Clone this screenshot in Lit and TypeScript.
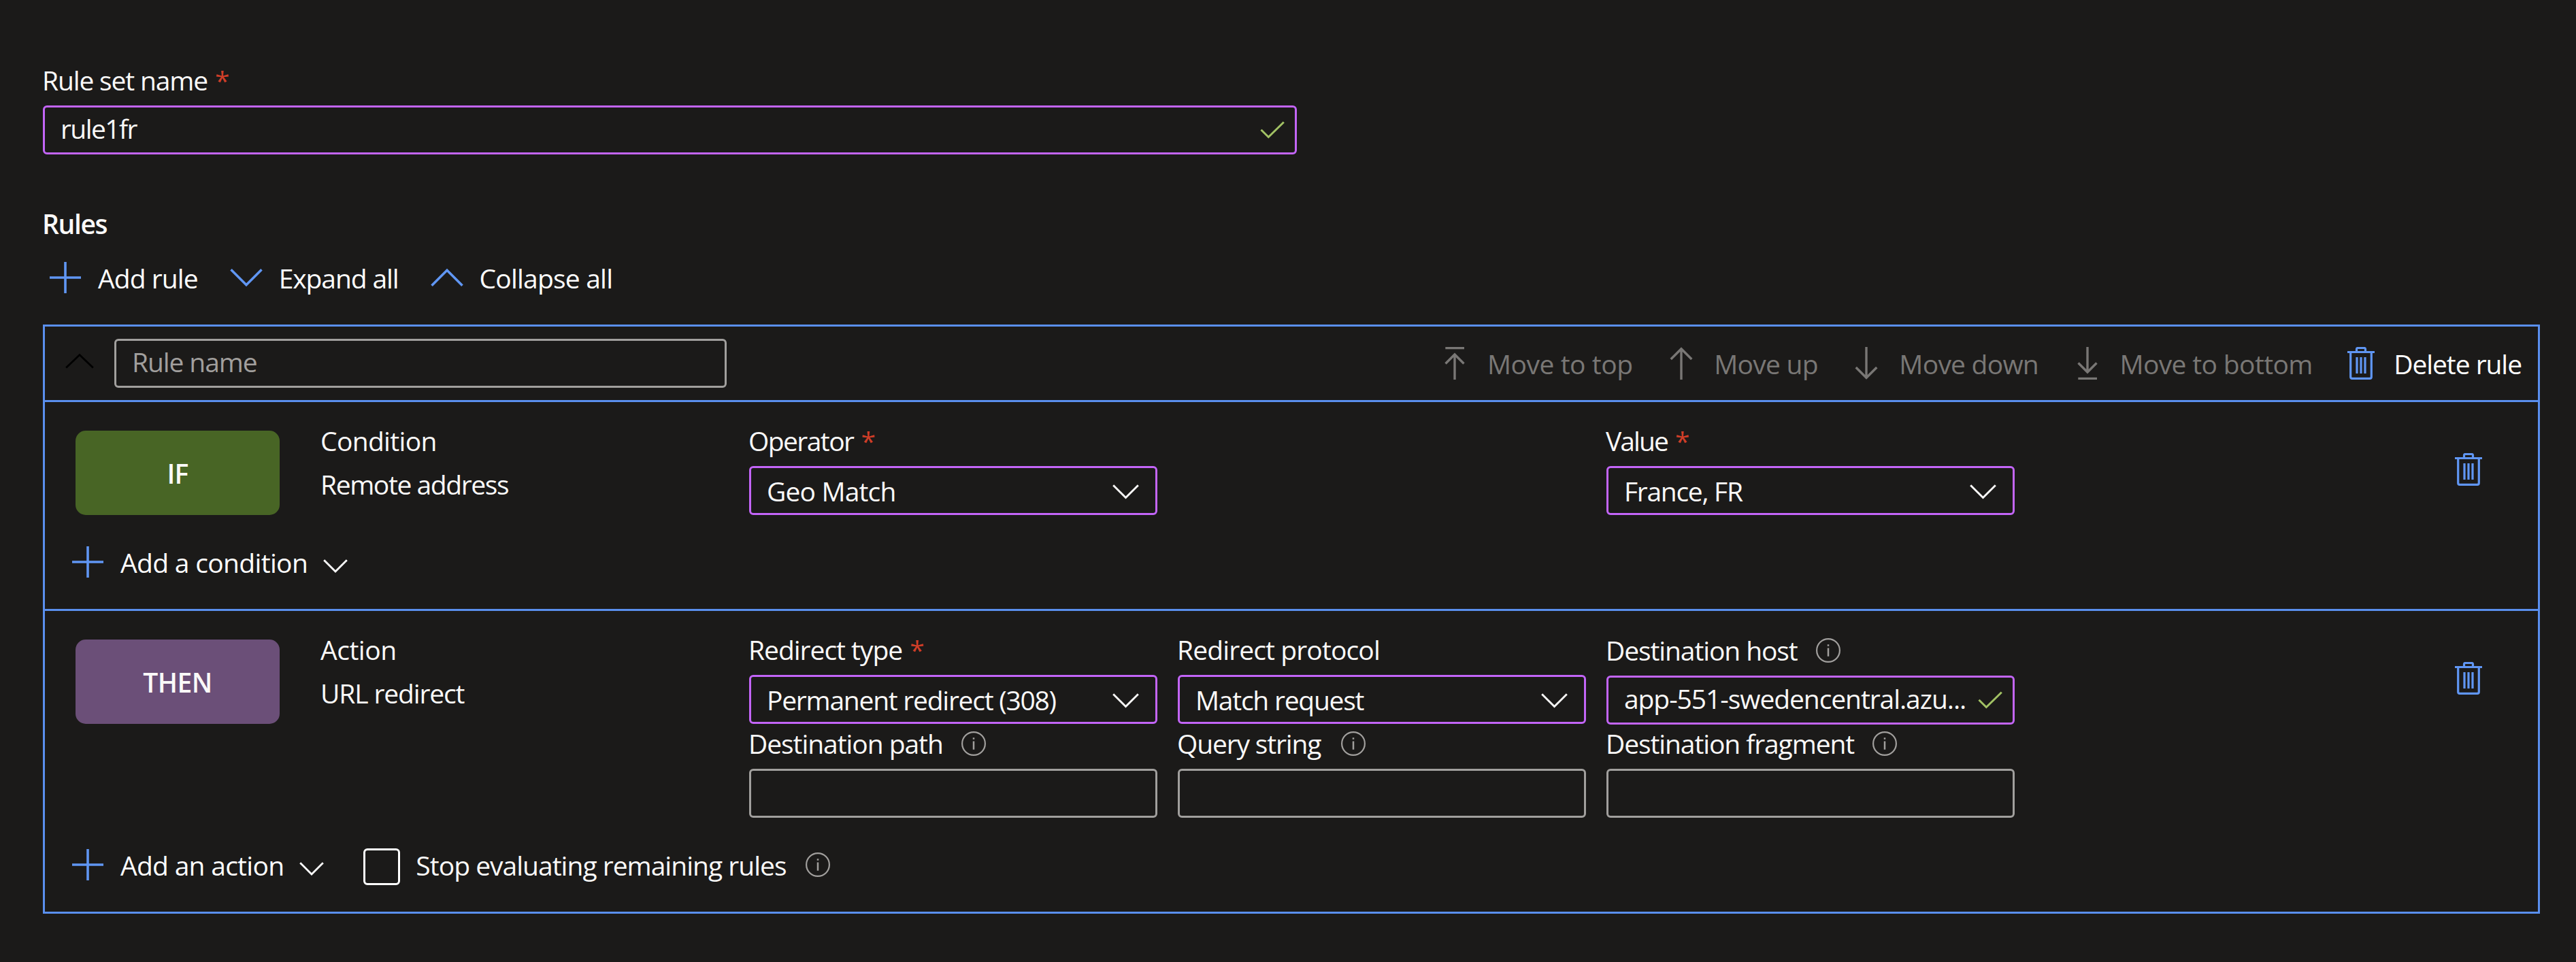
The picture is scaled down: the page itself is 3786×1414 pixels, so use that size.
import { LitElement, html, svg, css, nothing } from "lit";
import { customElement } from "lit/decorators.js";
import { styleMap } from "lit/directives/style-map.js";

// Tracking, in pixels, for each label at the 39px interface size.
const TRACKING: Record<string, number> = {
  "Rule set name": -1.15, "rule1fr": -1.59, "Rules": -1.38, "Add rule": -0.93,
  "Expand all": -1.1, "Collapse all": -0.8, "Rule name": -1.1, "Condition": -0.68,
  "Remote address": -1.41, "IF": -0.9, "Add a condition": -0.67, "Move to top": -0.46,
  "Move up": -0.73, "Move down": -0.76, "Move to bottom": -0.65, "Delete rule": -1.06,
  "Operator": -1.58, "Geo Match": -0.85, "Value": -1.92, "France, FR": -1.3,
  "Action": -0.47, "URL redirect": -1.13, "THEN": -0.57, "Add an action": -0.72,
  "Stop evaluating remaining rules": -0.99, "Redirect type": -1.02, "Redirect protocol": -0.88,
  "Permanent redirect (308)": -1.25, "Match request": -1.24, "Destination path": -1.06,
  "Query string": -1.15, "Destination host": -1.1, "Destination fragment": -1.1,
  "app-551-swedencentral.azu...": -1.08,
};

const text = (value: string, cls = "") =>
  html`<span class="text ${cls}" style=${styleMap({ letterSpacing: `${TRACKING[value] ?? -1}px` })}>${value}</span>`;

const icon = (body: unknown, cls = "") =>
  html`<svg class="icon ${cls}" viewBox="0 0 48 48" aria-hidden="true">${body}</svg>`;

const plus = icon(svg`<path d="M24 1V47M1 24H47" stroke-width="3.6"/>`, "blue");
const chevronDown = icon(svg`<path d="M1.5 12.3L24 34.8L46.5 12.3" stroke-width="3.6"/>`, "blue");
const chevronUp = icon(svg`<path d="M1.5 35.7L24 13.2L46.5 35.7" stroke-width="3.6"/>`, "blue");
const collapse = icon(svg`<path d="M4.2 30.6L24 11.6L43.8 30.6" stroke-width="2.8"/>`, "black");
const moveTop = icon(svg`<path d="M10.3 1.5H38M24 11V48M10.5 24.5L24 11L37.5 24.5" stroke-width="3.4"/>`, "muted");
const moveUp = icon(svg`<path d="M24 2V48M8.7 18L24 2.7L39.3 18" stroke-width="3.4"/>`, "muted");
const moveDown = icon(svg`<path d="M24 0V46M8.7 30L24 45.3L39.3 30" stroke-width="3.4"/>`, "muted");
const moveBottom = icon(svg`<path d="M10.3 46.5H38M24 0V37M10.5 23.5L24 37L37.5 23.5" stroke-width="3.4"/>`, "muted");
const trash = icon(
  svg`<path d="M17.5 6V3.2Q17.5 1.5 19.2 1.5H28.8Q30.5 1.5 30.5 3.2V6M8.7 8V44Q8.7 46.4 11 46.4H37Q39.3 46.4 39.3 44V8M18 15V39M24 15V39M30 15V39" stroke-width="3.2"/><path d="M4 7.5H44" stroke-width="3"/>`,
  "blue",
);
const caret = html`<svg class="caret" viewBox="0 0 39 22" aria-hidden="true"><path d="M1.2 1.2L19.5 19.5L37.8 1.2" stroke-width="2.9"/></svg>`;
const smallCaret = html`<svg class="small-caret" viewBox="0 0 36 20" aria-hidden="true"><path d="M1.2 1.2L18 18L34.8 1.2" stroke-width="2.8"/></svg>`;
const check = html`<svg class="check" viewBox="0 0 36 27" aria-hidden="true"><path d="M1.5 12.7L12.3 23.5L34.8 1.5" stroke-width="3"/></svg>`;
const info = html`<svg class="info" viewBox="0 0 36 36" aria-hidden="true"><circle cx="18" cy="18" r="16.9" stroke-width="2.2"/><path d="M18 9.2V11.8M18 14.5V26.8" stroke-width="2.5"/></svg>`;

type Kind = "select" | "valid" | "empty";
interface Field {
  label: string;
  kind: Kind;
  value?: string;
  required?: boolean;
  info?: boolean;
  cls?: string;
}

const control = (f: Field) => html`
  <div class="control ${f.kind}">
    ${f.value ? text(f.value) : nothing}
    ${f.kind === "select" ? caret : f.kind === "valid" ? check : nothing}
  </div>`;

const field = (f: Field) => html`
  <div class="field ${f.cls ?? ""}">
    <div class="label">
      ${text(f.label)}${f.required ? html`<span class="star">*</span>` : nothing}${f.info ? info : nothing}
    </div>
    ${control(f)}
  </div>`;

const command = (glyph: unknown, label: string, cls = "") =>
  html`<div class="command ${cls}">${glyph}${text(label)}</div>`;

@customElement("app-root")
export class AppRoot extends LitElement {
  static styles = css`
    :host {
      display: block;
      box-sizing: border-box;
      height: 1414px;
      padding: 94px 53px 0 63px;
      background: #1b1a19;
      color: #faf9f8;
      font: 400 39px/48px "Open Sans", "Noto Sans", sans-serif;
      white-space: nowrap;
    }
    * { box-sizing: border-box; }
    svg { display: block; flex: none; fill: none; stroke: currentColor; }
    .icon { width: 48px; height: 48px; }
    .blue { color: #6096f3; }
    .black { color: #000; }
    .muted { color: #797775; }
    .caret { width: 39px; height: 22px; margin-top: 3px; }
    .small-caret { width: 36px; height: 20px; margin: 11px 0 0 -1px; color: #fff; }
    .check { width: 36px; height: 27px; color: #a2c264; }
    .info { width: 36px; height: 36px; margin-left: 27px; color: #a19f9d; }

    .label { display: flex; align-items: center; height: 48px; margin: 0 0 13px -1px; }
    .star { margin-left: 11px; color: #d03e28; }
    .control {
      display: flex;
      align-items: center;
      justify-content: space-between;
      height: 72px;
      padding: 0 24px 0 23px;
      border: 3px solid #c365f8;
      border-radius: 6px;
    }
    .control.select .text { padding-top: 2px; }
    .control.valid { padding-right: 15px; }
    .control.valid .text { padding-bottom: 4px; }
    .control.empty { border-color: #a19f9d; color: #a19f9d; }
    .control.empty .text { padding-bottom: 4px; }

    .ruleset { width: 1843px; }
    .heading { margin: 78px 0 0 -1px; font-weight: 600; }
    .commands { display: flex; gap: 47.5px; color: #fff; }
    .main-commands { gap: 47px; margin: 31px 0 45px; padding-left: 9px; }
    .command { display: flex; align-items: center; gap: 24px; height: 48px; color: #fff; }
    .command .text { padding-top: 2px; }
    .command.disabled { color: #797775; }

    .panel { border: 3px solid #5a8fee; }
    .header {
      display: flex;
      align-items: center;
      height: 111px;
      padding: 0 24px 0 27px;
      border-bottom: 3px solid #5a8fee;
    }
    .rule-name { width: 900px; margin-left: 27px; }
    .header .commands { margin-left: auto; }

    .clause { padding: 33px 78px 45px 39px; }
    .clause + .clause { border-top: 3px solid #5a8fee; }
    .body {
      display: grid;
      grid-template-columns: 300px 631px 1860px 1fr;
      padding-left: 6px;
    }
    .badge {
      display: flex;
      align-items: center;
      justify-content: center;
      height: 124px;
      margin-top: 9px;
      padding-top: 2px;
      border-radius: 15px;
      font-weight: 600;
    }
    .badge.if { background: #486525; }
    .badge.then { background: #6b4f78; }
    .summary { display: flex; flex-direction: column; gap: 16px; margin-left: 60px; }
    .fields {
      display: grid;
      grid-template-columns: repeat(3, 600px);
      align-items: start;
      gap: 4px 30px;
      margin-left: 59px;
    }
    .third { grid-column: 3; }
    .lowered { padding-top: 1px; }
    .wide-info .info { margin-left: 30px; }
    .remove { justify-self: end; margin-top: 42px; }
    .footer { display: flex; height: 48px; margin-top: 45px; }
    .checkbox {
      width: 54px;
      height: 54px;
      margin-left: 58px;
      border: 3px solid #fff;
      border-radius: 6px;
    }
    .stop { display: flex; align-items: center; height: 48px; margin-left: 23px; }
    .stop .text { padding-top: 2px; }
    .stop .info { margin-left: 28px; }
  `;

  render() {
    return html`
      ${field({ label: "Rule set name", kind: "valid", value: "rule1fr", required: true, cls: "ruleset" })}
      <div class="heading">${text("Rules")}</div>
      <div class="commands main-commands">
        ${command(plus, "Add rule")}${command(chevronDown, "Expand all")}${command(chevronUp, "Collapse all")}
      </div>
      <div class="panel">
        <div class="header">
          ${collapse}
          <div class="control empty rule-name">${text("Rule name")}</div>
          <div class="commands">
            ${command(moveTop, "Move to top", "disabled")}
            ${command(moveUp, "Move up", "disabled")}
            ${command(moveDown, "Move down", "disabled")}
            ${command(moveBottom, "Move to bottom", "disabled")}
            ${command(trash, "Delete rule")}
          </div>
        </div>
        <div class="clause">
          <div class="body">
            <div class="badge if">${text("IF")}</div>
            <div class="summary">${text("Condition")}${text("Remote address")}</div>
            <div class="fields">
              ${field({ label: "Operator", kind: "select", value: "Geo Match", required: true })}
              ${field({ label: "Value", kind: "select", value: "France, FR", required: true, cls: "third" })}
            </div>
            <div class="remove">${trash}</div>
          </div>
          <div class="footer">
            <div class="command">${plus}${text("Add a condition")}${smallCaret}</div>
          </div>
        </div>
        <div class="clause">
          <div class="body">
            <div class="badge then">${text("THEN")}</div>
            <div class="summary">${text("Action")}${text("URL redirect")}</div>
            <div class="fields">
              ${field({ label: "Redirect type", kind: "select", value: "Permanent redirect (308)", required: true })}
              ${field({ label: "Redirect protocol", kind: "select", value: "Match request" })}
              ${field({ label: "Destination host", kind: "valid", value: "app-551-swedencentral.azu...", info: true, cls: "lowered" })}
              ${field({ label: "Destination path", kind: "empty", info: true })}
              ${field({ label: "Query string", kind: "empty", info: true, cls: "wide-info" })}
              ${field({ label: "Destination fragment", kind: "empty", info: true })}
            </div>
            <div class="remove">${trash}</div>
          </div>
          <div class="footer">
            <div class="command">${plus}${text("Add an action")}${smallCaret}</div>
            <div class="checkbox"></div>
            <div class="stop">${text("Stop evaluating remaining rules")}${info}</div>
          </div>
        </div>
      </div>
    `;
  }
}
